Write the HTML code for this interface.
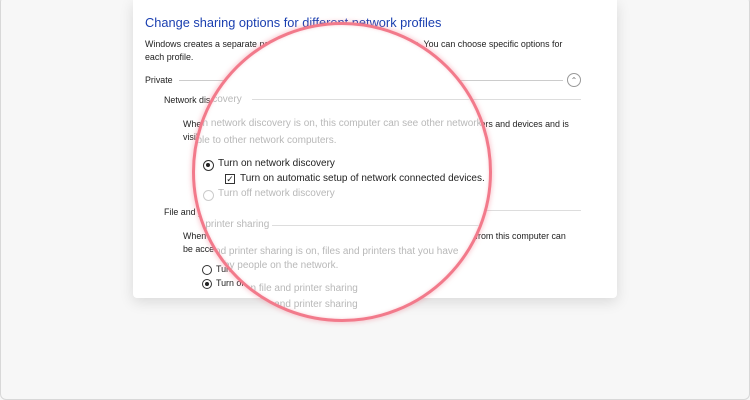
<!DOCTYPE html>
<html><head><style>
*{margin:0;padding:0;box-sizing:border-box}
body{width:750px;height:400px;background:#f7f7f7;position:relative;overflow:hidden;font-family:"Liberation Sans",sans-serif;}
.frame{position:absolute;left:0;top:-4px;width:750px;height:404px;border:1px solid #d8d8d8;border-radius:6px;}
.card{position:absolute;left:133px;top:0;width:484px;height:298px;background:#fff;border-radius:0 0 4px 4px;box-shadow:0 4px 14px rgba(0,0,0,.12);overflow:hidden}
.t{position:absolute;white-space:nowrap;font-size:8.9px;color:#222}
.line{position:absolute;height:1px;background:#ddd}
.lens{position:absolute;left:192px;top:22px;width:300px;height:300px;border-radius:50%;background:#fff;overflow:hidden;border:3px solid #f27a8b;box-shadow:0 0 5px 1px rgba(242,122,139,.4),inset 0 0 3px rgba(242,122,139,.35)}
.in{position:absolute;left:-195px;top:-25px;width:750px;height:400px}
.g{color:#b8b8b8}
.b{font-size:10px}
.radio{position:absolute;width:10px;height:10px;border:1px solid #333;border-radius:50%}
.radio.on::after{content:"";position:absolute;left:2px;top:2px;width:4px;height:4px;border-radius:50%;background:#222}
</style></head><body>
<div class="frame"></div>
<div class="card">
 <div class="t" style="left:12px;top:15px;font-size:12.8px;color:#1a3fb0">Change sharing options for different network profiles</div>
 <div class="t" style="left:12px;top:39px">Windows creates a separate network profile for each network you use. You can choose specific options for</div>
 <div class="t" style="left:12px;top:52px">each profile.</div>
 <div class="t" style="left:12px;top:75px">Private</div>
 <div class="line" style="left:46px;top:80px;width:384px;background:#ccc"></div>
 <div style="position:absolute;left:434px;top:73px;width:14px;height:14px;border:1px solid #999;border-radius:50%;font-size:8px;color:#777;text-align:center;line-height:13px">&#8963;</div>
 <div class="t" style="left:31px;top:95px">Network discovery</div>
 <div class="line" style="left:110px;top:99px;width:338px"></div>
 <div class="t" style="left:50px;top:119px">When network discovery is on, this computer can see other network computers and devices and is</div>
 <div class="t" style="left:50px;top:132px">visible to other network computers.</div>
 <div class="line" style="left:110px;top:210px;width:338px"></div>
 <div class="t" style="left:31px;top:207px">File and printer sharing</div>
 <div class="t" style="left:50px;top:231px">When file and printer sharing is on, files and printers that you have shared from this computer can</div>
 <div class="t" style="left:50px;top:244px">be accessed by people on the network.</div>
 <div class="radio" style="left:69px;top:265px"></div><div class="t" style="left:83px;top:264px">Turn on file and printer sharing</div>
 <div class="radio on" style="left:69px;top:279px"></div><div class="t" style="left:83px;top:278px">Turn off file and printer sharing</div>
</div>
<div class="lens"><div class="in">
 <div class="t b g" style="left:160px;top:94px">Network discovery</div>
 <div class="line" style="left:252px;top:99px;width:330px"></div>
 <div class="t b g" style="left:182px;top:118px">When network discovery is on, this computer can see other network computers and devices and is</div>
 <div class="t b g" style="left:182px;top:135px">visible to other network computers.</div>
 <div class="radio on" style="left:203px;top:160px;width:11px;height:11px"></div>
 <div class="t b" style="left:218px;top:158px">Turn on network discovery</div>
 <div style="position:absolute;left:225px;top:174px;width:10px;height:10px;border:1px solid #333;font-size:9px;line-height:9px;text-align:center;color:#222">&#10003;</div>
 <div class="t b" style="left:240px;top:173px">Turn on automatic setup of network connected devices.</div>
 <div class="radio" style="left:203px;top:190px;width:11px;height:11px;border-color:#ccc"></div>
 <div class="t b g" style="left:218px;top:188px">Turn off network discovery</div>
 <div class="t b g" style="left:167px;top:219px">File and printer sharing</div>
 <div class="line" style="left:272px;top:225px;width:310px"></div>
 <div class="t b g" style="left:165px;top:246px">When file and printer sharing is on, files and printers that you have</div>
 <div class="t b g" style="left:165px;top:260px">be accessed by people on the network.</div>
 <div class="t b g" style="left:222px;top:283px">Turn on file and printer sharing</div>
 <div class="t b g" style="left:222px;top:299px">Turn off file and printer sharing</div>
</div></div>
</body></html>
